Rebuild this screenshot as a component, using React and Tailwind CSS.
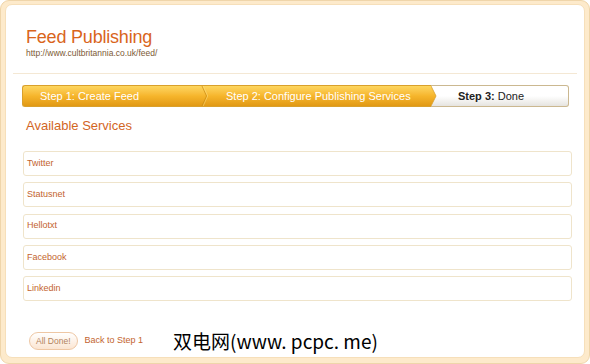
const services = ['Twitter', 'Statusnet', 'Hellotxt', 'Facebook', 'Linkedin'];

const StepBar = () => {
  return (
    <div className="ml-[9px] mr-[8px] mt-[11px] flex h-[22px] text-[11px] leading-[20px]">
      <div className="flex rounded-l-[3px] border border-r-0 border-[#d9a02c] bg-linear-to-b from-[#fdd65f] via-[#f6b52b] to-[#e19913] text-white">
        <div className="w-[178px] pl-[17px]">Step 1: Create Feed</div>
        <svg width="8" height="20" viewBox="0 0 8 20">
          <polyline points="1,0 5.5,10 1,20" fill="none" stroke="#c98a12" strokeWidth="1" opacity="0.7" />
          <polyline points="2.2,0 6.7,10 2.2,20" fill="none" stroke="#ffe38e" strokeWidth="0.8" opacity="0.6" />
        </svg>
        <div className="w-[222px] pl-[17px]">Step 2: Configure Publishing Services</div>
      </div>
      <div className="flex flex-1 rounded-r-[3px] border border-l-0 border-[#cbb890] bg-linear-to-b from-white via-white to-[#e6e4e0] text-[#222]">
        <svg width="6" height="20" viewBox="0 0 6 20">
          <defs>
            <linearGradient id="arr" x1="0" y1="0" x2="0" y2="1">
              <stop offset="0" stopColor="#fdd65f" />
              <stop offset="0.5" stopColor="#f6b52b" />
              <stop offset="1" stopColor="#e19913" />
            </linearGradient>
          </defs>
          <polygon points="0,0 5,10 0,20" fill="url(#arr)" />
          <polyline points="0,0 5,10 0,20" fill="none" stroke="#d9a02c" strokeWidth="0.8" />
        </svg>
        <div className="pl-[21px]">
          <span className="font-bold">Step 3:</span> Done
        </div>
      </div>
    </div>
  );
};

export default function App() {
  return (
    <div className="h-[364px] w-[590px] rounded-[9px] border border-[#efd5aa] bg-[#fdeacb] pb-[5px] pl-[4px] pr-[4px] pt-[3px] font-['Liberation_Sans',Arial,sans-serif]">
      <div className="h-full rounded-[7px] border border-[#f6dfba] bg-white px-[7px]">
        <div className="pl-[13px] pt-[22px]">
          <div className="text-[18px] leading-[20px] tracking-[-0.2px] text-[#d9651c]">Feed Publishing</div>
          <div className="mt-[1px] text-[8.5px] leading-[10px] text-[#7d5a35]">http://www.cultbritannia.co.uk/feed/</div>
        </div>
        <div className="mt-[15px] h-px bg-[#f4e8d4]" />
        <StepBar />
        <div className="mt-[11px] pl-[13px] text-[13px] leading-[16px] text-[#d2651f]">Available Services</div>
        <div className="ml-[10px] mr-[5px] mt-[17px] flex flex-col gap-[6.25px]">
          {services.map((s) => (
            <div
              key={s}
              className="flex h-[25px] items-center rounded-[3px] border border-[#efe4cb] pl-[3px] text-[9px] text-[#c3642e]"
            >
              {s}
            </div>
          ))}
        </div>
        <div className="ml-[16px] mt-[30px] flex items-center">
          <div className="flex h-[18px] items-center rounded-full border border-[#eec7a4] bg-linear-to-b from-white to-[#fbe5d2] px-[6px] text-[8.5px] text-[#b2825c]">
            All Done!
          </div>
          <div className="ml-[7px] text-[9px] text-[#c3642e]">Back to Step 1</div>
          <div className="ml-[30px] font-['Noto_Sans_CJK_SC',sans-serif] text-[19px] leading-[20px] text-black">
            双电网(www. pcpc. me)
          </div>
        </div>
      </div>
    </div>
  );
}
